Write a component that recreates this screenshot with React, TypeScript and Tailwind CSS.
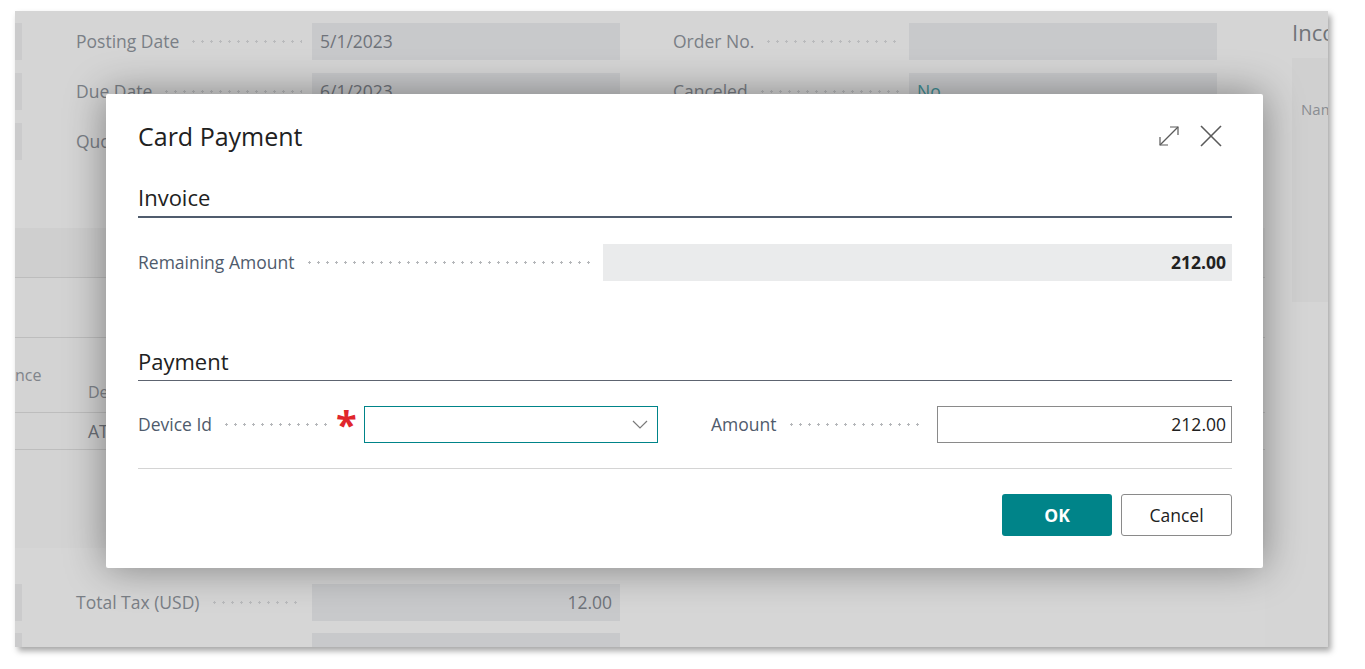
import React from 'react';

const font = "font-['Open_Sans',_'Noto_Sans',_sans-serif]";

function Dots({ light = false, className = '' }: { light?: boolean; className?: string }) {
  return (
    <span
      className={`flex-1 h-[3px] bg-repeat-x bg-[length:9px_3px] ${
        light
          ? 'bg-[radial-gradient(circle,#b9babc_1px,transparent_1.3px)]'
          : 'bg-[radial-gradient(circle,#b4b6b9_1px,transparent_1.3px)]'
      } ${className}`}
    />
  );
}

function BgField({ label, value, right = false, teal = false }: { label: string; value?: string; right?: boolean; teal?: boolean }) {
  return (
    <div className="flex h-[37px]">
      <div className="w-[236px] flex items-center pr-[10px] text-[17.5px] text-[#7a7f86]">
        <span className="whitespace-nowrap">{label}</span>
        {label && <Dots light className="ml-[10px]" />}
      </div>
      <div
        className={`w-[308px] bg-[#c8c9cb] flex items-center px-[8px] text-[17.5px] ${
          right ? 'justify-end' : ''
        } ${teal ? 'text-[#3f8d93]' : 'text-[#6f737a]'}`}
      >
        {value}
      </div>
    </div>
  );
}

function Background() {
  return (
    <div className="w-[1313px] h-[636px] bg-[#d5d5d5] shadow-[3px_4px_6px_rgba(0,0,0,0.35)] overflow-hidden flex">
      <div className="w-[1250px] shrink-0 flex flex-col">
        <div className="shrink-0 pt-[12px] flex flex-col gap-[13px]">
          {[
            ['Posting Date', '5/1/2023', 'Order No.', '', false],
            ['Due Date', '6/1/2023', 'Canceled', 'No', true],
            ['Quote No.', '', 'Closed', 'No', true],
          ].map(([l1, v1, l2, v2, t]) => (
            <div key={l1 as string} className="flex">
              <div className="w-[7px] h-[37px] bg-[#cbcbcc]" />
              <div className="ml-[54px]">
                <BgField label={l1 as string} value={v1 as string} />
              </div>
              <div className="ml-[53px]">
                <BgField label={l2 as string} value={v2 as string} teal={t as boolean} />
              </div>
            </div>
          ))}
        </div>
        <div className="shrink-0 mt-[68px] h-[50px] bg-[#cfcfcf] border-b border-[#bdbdbd]" />
        <div className="shrink-0 h-[60px] border-b border-[#bdbdbd] bg-[#d3d3d3]" />
        <div className="shrink-0 h-[75px] border-b border-[#bdbdbd] bg-[#d3d3d3] relative text-[16px] text-[#80848a]">
          <span className="absolute left-[0px] top-[25px]">nce</span>
          <span className="absolute left-[73px] top-[42px]">Description</span>
        </div>
        <div className="shrink-0 h-[37px] border-b border-[#bdbdbd] bg-[#d3d3d3] flex items-center pl-[73px] text-[17.5px] text-[#6c7077]">
          ATM Withdrawal
        </div>
        <div className="shrink-0 h-[98px] bg-[#d3d3d3]" />
        <div className="shrink-0 h-[200px] bg-[#d6d6d6] pt-[36px] flex flex-col gap-[12px]">
          {['Total Tax (USD)', ''].map((l, i) => (
            <div key={i} className="flex">
              <div className="w-[7px] h-[37px] bg-[#cbcbcc]" />
              <div className="ml-[54px]">
                <BgField label={l} value={i === 0 ? '12.00' : ''} right />
              </div>
            </div>
          ))}
        </div>
      </div>
      <div className="ml-[27px] flex-1 min-w-0 flex flex-col overflow-hidden">
        <div className="pt-[6px] h-[47px] text-[22px] leading-[30px] text-[#707378] whitespace-nowrap">Incoming Document Files</div>
        <div className="h-[244px] bg-[#d0d0d0] pt-[40px] pl-[9px] text-[15px] text-[#8a8d92] whitespace-nowrap">Name</div>
      </div>
    </div>
  );
}

function Dialog() {
  return (
    <div className="absolute left-[106px] top-[94px] w-[1157px] h-[474px] bg-white rounded-[2px] shadow-[0_0_40px_rgba(0,0,0,0.4)] pr-[31px] pl-[32px] pt-[26px] text-[#212121]">
      <div className="flex items-center justify-between h-[32px]">
        <h1 className="text-[25px] leading-[32px] font-normal">Card Payment</h1>
        <div className="flex items-center gap-[20px] mr-[10px]">
          <svg width="22" height="22" viewBox="0 0 22 22" fill="none" stroke="#5a5a5a" strokeWidth="1.2">
            <line x1="2" y1="20" x2="20" y2="2" />
            <polyline points="12,2 20,2 20,10" />
            <polyline points="2,12 2,20 10,20" />
          </svg>
          <svg width="22" height="22" viewBox="0 0 22 22" fill="none" stroke="#5a5a5a" strokeWidth="1.6">
            <line x1="1" y1="1" x2="21" y2="21" />
            <line x1="21" y1="1" x2="1" y2="21" />
          </svg>
        </div>
      </div>

      <div className="mt-[31px] text-[22px] leading-[28px] pb-[5px] border-b-2 border-[#505c6d]">Invoice</div>

      <div className="mt-[26px] flex h-[37px]">
        <div className="w-[465px] flex items-center pr-[8px] text-[17.5px] text-[#4f5b6c]">
          <span className="whitespace-nowrap">Remaining Amount</span>
          <Dots className="ml-[11px]" />
        </div>
        <div className="flex-1 bg-[#eaebec] flex items-center justify-end pr-[6px] text-[17.5px] font-bold">212.00</div>
      </div>

      <div className="mt-[66px] text-[22px] leading-[28px] pb-[5px] border-b border-[#5d6470]">Payment</div>

      <div className="mt-[25px] flex h-[37px]">
        <div className="w-[520px] flex">
          <div className="w-[226px] flex items-center text-[17.5px] text-[#4f5b6c]">
            <span className="whitespace-nowrap">Device Id</span>
            <Dots className="ml-[10px]" />
            <span className="w-[34px] h-full flex items-start overflow-visible">
              <span className="text-[38px] leading-[38px] font-bold text-[#e0262c] mt-[-1px] ml-[6px]">*</span>
            </span>
          </div>
          <div className="flex-1 border border-[#008489] flex items-center justify-end pr-[9px]">
            <svg width="16" height="9" viewBox="0 0 16 9" fill="none" stroke="#7a7a7a" strokeWidth="1.2">
              <polyline points="1,1 8,8 15,1" />
            </svg>
          </div>
        </div>
        <div className="ml-[53px] flex-1 flex">
          <div className="w-[226px] flex items-center pr-[12px] text-[17.5px] text-[#4f5b6c]">
            <span className="whitespace-nowrap">Amount</span>
            <Dots className="ml-[10px]" />
          </div>
          <div className="flex-1 border border-[#8a8a8a] flex items-center justify-end pr-[5px] text-[17.5px]">212.00</div>
        </div>
      </div>

      <div className="mt-[25px] border-t border-[#d4d4d4]" />

      <div className="mt-[25px] flex justify-end gap-[9px]">
        <button className="w-[110px] h-[42px] bg-[#008489] text-white font-bold text-[17.5px] rounded-[3px]">OK</button>
        <button className="w-[111px] h-[42px] bg-white border border-[#8a8a8a] text-[17.5px] rounded-[3px]">Cancel</button>
      </div>
    </div>
  );
}

export default function App() {
  return (
    <div className={`relative w-[1365px] h-[669px] bg-white pl-[15px] pt-[11px] overflow-hidden ${font}`}>
      <Background />
      <Dialog />
    </div>
  );
}
